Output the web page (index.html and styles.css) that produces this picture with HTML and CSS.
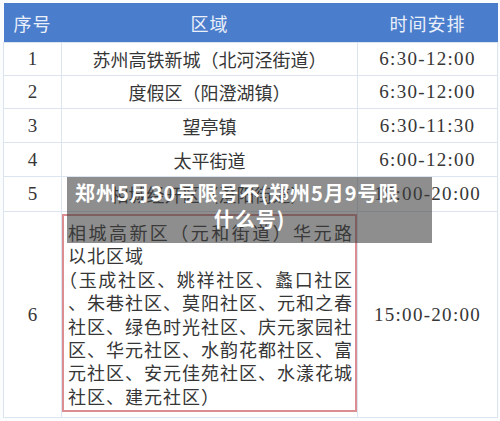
FILE: index.html
```html
<!DOCTYPE html>
<html lang="zh-CN">
<head>
<meta charset="utf-8">
<link rel="stylesheet" href="styles.css">
</head>
<body>
<div class="page">
  <table class="grid">
    <colgroup>
      <col class="c-no">
      <col class="c-area">
      <col class="c-time">
    </colgroup>
    <thead>
      <tr class="head"><th>序号</th><th>区域</th><th>时间安排</th></tr>
    </thead>
    <tbody>
      <tr class="r1"><td class="no">1</td><td class="area">苏州高铁新城（北河泾街道）</td><td class="time">6:30-12:00</td></tr>
      <tr class="r2"><td class="no">2</td><td class="area">度假区（阳澄湖镇）</td><td class="time">6:30-12:00</td></tr>
      <tr class="r3"><td class="no">3</td><td class="area">望亭镇</td><td class="time">6:30-11:30</td></tr>
      <tr class="r4"><td class="no">4</td><td class="area">太平街道</td><td class="time">6:00-12:00</td></tr>
      <tr class="r5"><td class="no">5</td><td class="area">相城经开区（澄阳街道）</td><td class="time">15:00-20:00</td></tr>
      <tr class="r6">
        <td class="no">6</td>
        <td class="area big">
          <div class="redbox">
            <span class="ln j">相城高新区（元和街道）华元路</span>
            <span class="ln">以北区域</span>
            <span class="ln j trim">（玉成社区、姚祥社区、蠡口社区</span>
            <span class="ln">、朱巷社区、莫阳社区、元和之春</span>
            <span class="ln">社区、绿色时光社区、庆元家园社</span>
            <span class="ln">区、华元社区、水韵花都社区、富</span>
            <span class="ln">元社区、安元佳苑社区、水漾花城</span>
            <span class="ln">社区、建元社区）</span>
          </div>
        </td>
        <td class="time">15:00-20:00</td>
      </tr>
    </tbody>
  </table>
  <div class="caption">
    <span class="cap1">郑州5月30号限号不(郑州5月9号限</span>
    <span class="cap2">什么号)</span>
  </div>
</div>
</body>
</html>
```

FILE: styles.css
```css
html, body {
  margin: 0;
  padding: 0;
  background: #ffffff;
}
.page {
  position: relative;
  width: 500px;
  height: 421px;
  overflow: hidden;
  padding: 3px 3px 0 3px;
  box-sizing: border-box;
  background: #fbfcfd;
}
.grid {
  width: 494px;
  border-collapse: collapse;
  table-layout: fixed;
  background: #ffffff;
}
.c-no { width: 58px; }
.c-area { width: 296px; }
.c-time { width: 140px; }

.head th {
  height: 39px;
  padding: 0;
  background: #4a7dcc;
  color: #eaf0fa;
  font-family: "Noto Sans CJK SC", "Noto Sans", sans-serif;
  font-weight: normal;
  font-size: 18px;
  text-align: center;
  vertical-align: middle;
  letter-spacing: 1px;
}
.grid td {
  padding: 0;
  border: 1px solid #dce5ef;
  color: #363636;
  font-family: "Liberation Serif", "Noto Sans CJK SC", serif;
  font-size: 18px;
  text-align: center;
  vertical-align: middle;
}
.r1 td, .r2 td { height: 32px; }
.r3 td, .r4 td { height: 33px; }
.r5 td { height: 34px; }
.r6 td { height: 203px; }
.grid td.no { font-size: 19px; }
.grid td.time {
  font-size: 19px;
  letter-spacing: 1.3px;
}
.area {
  font-family: "Noto Sans CJK SC", serif;
}
.grid td.big {
  vertical-align: top;
  padding: 2px 0 0 0;
}
.redbox {
  border: 2px solid #dc8d92;
  height: 198px;
  box-sizing: border-box;
  padding: 7px 2px 0 4px;
  text-align: left;
  font-size: 18px;
  letter-spacing: 1px;
  line-height: 23.4px;
  text-spacing-trim: space-all;
}
.ln {
  display: block;
}
.ln.j {
  text-align: justify;
  text-align-last: justify;
}
.ln.trim {
  text-spacing-trim: trim-start;
}
.caption {
  position: absolute;
  left: 67px;
  top: 177px;
  width: 365px;
  height: 66px;
  box-sizing: border-box;
  padding: 3px 0 0 8px;
  background: rgba(60, 60, 60, 0.58);
  color: #ffffff;
  font-family: "Noto Sans CJK SC", sans-serif;
  font-weight: bold;
  font-size: 20px;
  line-height: 26px;
  letter-spacing: 1px;
}
.cap1 {
  display: block;
  white-space: nowrap;
}
.cap2 {
  display: block;
  text-align: center;
  padding-right: 8px;
}
```
